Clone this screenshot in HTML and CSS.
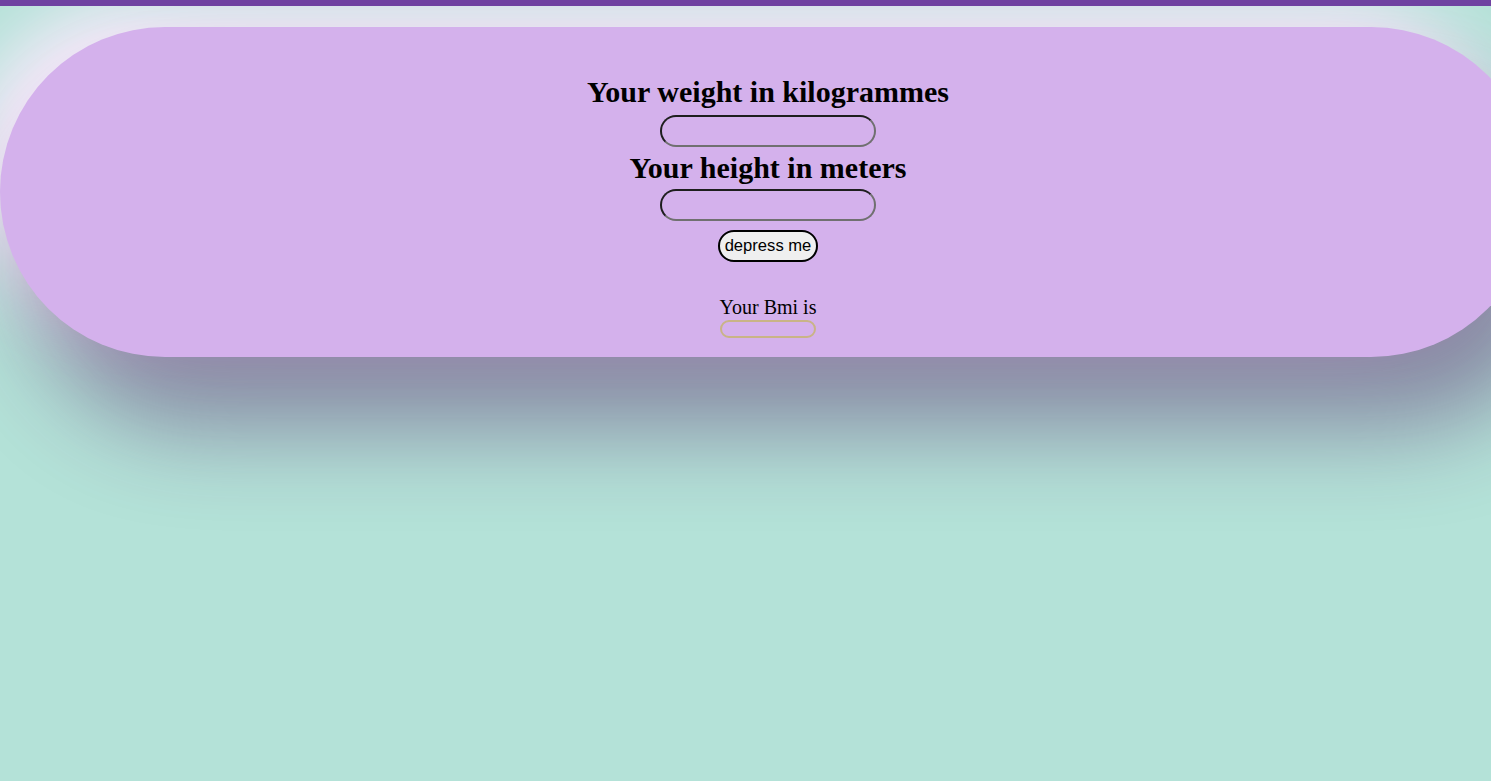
FILE: index.html
```html
<!DOCTYPE html>
<html>
<head>
<meta charset="utf-8">
<title>BMI</title>
<link rel="stylesheet" href="styles.css">
</head>
<body>
<div class="card">
  <h1 class="label">Your weight in kilogrammes</h1>
  <input class="field field-weight" type="text">
  <h1 class="label label-height">Your height in meters</h1>
  <input class="field field-height" type="text">
  <button class="btn">depress me</button>
  <p class="result-label">Your Bmi is</p>
  <output class="result"></output>
</div>
</body>
</html>
```
FILE: styles.css
```css
html, body {
  margin: 0;
  padding: 0;
}
body {
  border-top: 6px solid #6f42a1;
  background: #b4e2d8;
  height: 100vh;
  box-sizing: border-box;
  overflow: hidden;
  font-family: "Liberation Serif", "Times New Roman", serif;
  padding-top: 21px;
}
.card {
  width: 1536px;
  height: 330px;
  box-sizing: border-box;
  border-radius: 165px;
  background: #d4b1ec;
  padding-top: 47px;
  display: flex;
  flex-direction: column;
  align-items: center;
  box-shadow: 30px 70px 95px rgba(85, 35, 105, 0.48), -30px -25px 70px #fbeafd;
}
.label {
  margin: 0;
  font-size: 30px;
  line-height: 35px;
  font-weight: bold;
  color: #000;
}
.label-height {
  margin-top: 3px;
}
.field {
  width: 216px;
  height: 32px;
  box-sizing: border-box;
  border: 2px solid;
  border-color: #1e1e1e #707070 #707070 #1e1e1e;
  border-radius: 16px;
  background: transparent;
  margin-top: 6px;
}
.field-height {
  margin-top: 4px;
}
.btn {
  margin-top: 9px;
  height: 32px;
  box-sizing: border-box;
  padding: 0 5px;
  border: 2px solid #000;
  border-radius: 16px;
  background: #efefef;
  font-family: "Liberation Sans", Arial, sans-serif;
  font-size: 16.6px;
  color: #000;
}
.result-label {
  margin: 34px 0 0;
  font-size: 20px;
  line-height: 23px;
}
.result {
  display: block;
  margin-top: 1px;
  width: 96px;
  height: 18px;
  box-sizing: border-box;
  border: 2px solid #c9b486;
  border-radius: 9px;
}
```
